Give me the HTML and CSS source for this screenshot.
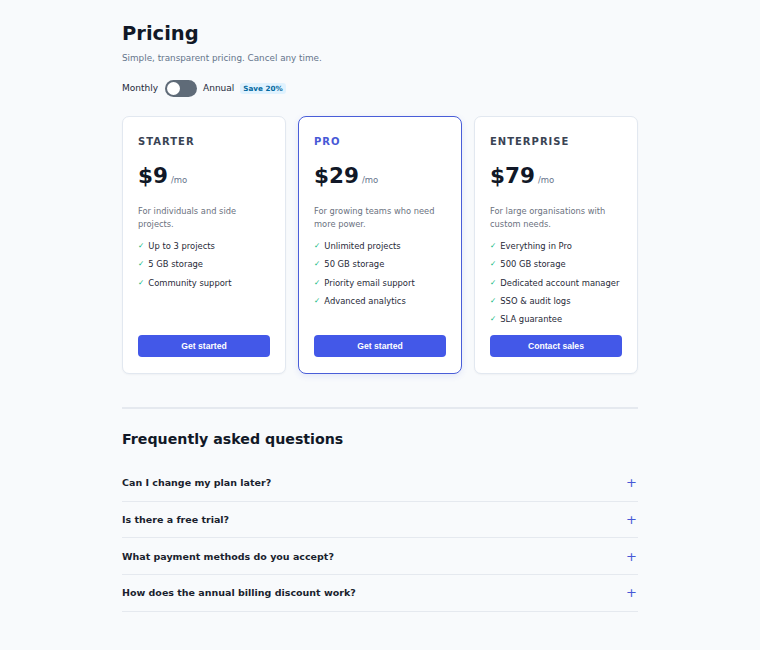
FILE: index.html
```html
<!DOCTYPE html>
<html lang="en">
<head>
<meta charset="utf-8">
<title>Pricing</title>
<link rel="stylesheet" href="styles.css">
</head>
<body>
<main class="page">
  <header class="intro">
    <h1 class="title">Pricing</h1>
    <p class="subtitle">Simple, transparent pricing. Cancel any time.</p>
    <div class="billing">
      <span class="billing-label">Monthly</span>
      <span class="switch"><span class="knob"></span></span>
      <span class="billing-label">Annual</span>
      <span class="badge">Save 20%</span>
    </div>
  </header>

  <section class="plans">
    <article class="plan">
      <h2 class="plan-name">STARTER</h2>
      <div class="price"><span class="amount">$9</span><span class="per">/mo</span></div>
      <p class="plan-desc">For individuals and side projects.</p>
      <ul class="features">
        <li><span class="tick">✓</span>Up to 3 projects</li>
        <li><span class="tick">✓</span>5 GB storage</li>
        <li><span class="tick">✓</span>Community support</li>
      </ul>
      <button class="cta">Get started</button>
    </article>

    <article class="plan plan-featured">
      <h2 class="plan-name">PRO</h2>
      <div class="price"><span class="amount">$29</span><span class="per">/mo</span></div>
      <p class="plan-desc">For growing teams who need more power.</p>
      <ul class="features">
        <li><span class="tick">✓</span>Unlimited projects</li>
        <li><span class="tick">✓</span>50 GB storage</li>
        <li><span class="tick">✓</span>Priority email support</li>
        <li><span class="tick">✓</span>Advanced analytics</li>
      </ul>
      <button class="cta">Get started</button>
    </article>

    <article class="plan">
      <h2 class="plan-name">ENTERPRISE</h2>
      <div class="price"><span class="amount">$79</span><span class="per">/mo</span></div>
      <p class="plan-desc">For large organisations with custom needs.</p>
      <ul class="features">
        <li><span class="tick">✓</span>Everything in Pro</li>
        <li><span class="tick">✓</span>500 GB storage</li>
        <li><span class="tick">✓</span>Dedicated account manager</li>
        <li><span class="tick">✓</span>SSO &amp; audit logs</li>
        <li><span class="tick">✓</span>SLA guarantee</li>
      </ul>
      <button class="cta">Contact sales</button>
    </article>
  </section>

  <section class="faq">
    <h2 class="faq-title">Frequently asked questions</h2>
    <div class="faq-item"><span>Can I change my plan later?</span><span class="plus">+</span></div>
    <div class="faq-item"><span>Is there a free trial?</span><span class="plus">+</span></div>
    <div class="faq-item"><span>What payment methods do you accept?</span><span class="plus">+</span></div>
    <div class="faq-item"><span>How does the annual billing discount work?</span><span class="plus">+</span></div>
  </section>
</main>
</body>
</html>
```

FILE: styles.css
```css
* { box-sizing: border-box; }

html, body {
  margin: 0;
  padding: 0;
  background: #f8fafc;
  color: #0f172a;
  font-family: "DejaVu Sans", sans-serif;
}

.page {
  width: 516px;
  margin: 0 auto;
  padding: 22px 0 40px;
}

.title {
  margin: 0;
  font-size: 19.5px;
  line-height: 24px;
  font-weight: 700;
  color: #111827;
}

.subtitle {
  margin: 5px 0 0;
  font-size: 8.8px;
  line-height: 14px;
  color: #64748b;
}

.billing {
  display: flex;
  align-items: center;
  margin-top: 14px;
  height: 18px;
}

.billing-label {
  font-size: 9px;
  color: #1e293b;
}

.switch {
  width: 32px;
  height: 17px;
  border-radius: 9px;
  background: #5f6b78;
  margin: 0 6px 0 7px;
  display: flex;
  align-items: center;
  padding: 0 2px;
}

.knob {
  width: 13px;
  height: 13px;
  border-radius: 50%;
  background: #fff;
}

.badge {
  margin-left: 6px;
  font-size: 7.2px;
  font-weight: 700;
  color: #0369a1;
  background: #e0f2fe;
  padding: 1px 3px;
  border-radius: 3px;
}

.plans {
  display: grid;
  grid-template-columns: repeat(3, 1fr);
  gap: 12px;
  margin-top: 19px;
}

.plan {
  background: #fff;
  border: 1px solid #e2e8f0;
  border-radius: 7px;
  padding: 18px 15px 17px;
  display: flex;
  flex-direction: column;
  height: 258px;
  box-shadow: 0 1px 2px rgba(15, 23, 42, 0.04);
}

.plan-featured {
  border: 1.5px solid #4a5ed8;
  border-radius: 8px;
  box-shadow: 0 2px 6px rgba(67, 88, 214, 0.12);
}

.plan-name {
  margin: 0;
  font-size: 10px;
  line-height: 14px;
  font-weight: 700;
  letter-spacing: 1px;
  color: #3a4354;
}

.plan-featured .plan-name { color: #4758d6; }

.price {
  display: flex;
  align-items: baseline;
  margin-top: 13px;
  line-height: 28px;
}

.amount {
  font-size: 21.5px;
  font-weight: 700;
  color: #111827;
}

.per {
  margin-left: 3px;
  font-size: 8.5px;
  color: #64748b;
}

.plan-desc {
  margin: 11px 0 0;
  font-size: 8.3px;
  line-height: 13px;
  color: #6b7280;
}

.features {
  list-style: none;
  margin: 6px 0 0;
  padding: 0;
  font-size: 8.4px;
  color: #1f2937;
}

.features li {
  height: 18.25px;
  line-height: 18px;
  display: flex;
  align-items: center;
  white-space: nowrap;
}

.tick {
  color: #10b981;
  font-size: 7.5px;
  margin-right: 4px;
}

.cta {
  margin-top: auto;
  margin-bottom: -1px;
  height: 22px;
  border: 0;
  border-radius: 4px;
  background: #4358e8;
  color: #fff;
  font-family: "Liberation Sans", Arial, sans-serif;
  font-size: 8.6px;
  font-weight: 700;
}

.faq {
  margin-top: 33px;
  border-top: 2px solid #e5e9ef;
  padding-top: 21px;
}

.faq-title {
  margin: 0 0 17px;
  font-size: 14.2px;
  line-height: 18px;
  font-weight: 700;
  color: #111827;
}

.faq-item {
  display: flex;
  justify-content: space-between;
  align-items: center;
  height: 36.7px;
  border-bottom: 1px solid #e5e9ef;
  font-size: 9.5px;
  font-weight: 700;
  color: #1a1f2e;
}

.plus {
  color: #4758d6;
  font-weight: 400;
  font-size: 13px;
  margin-right: 1px;
}
```
